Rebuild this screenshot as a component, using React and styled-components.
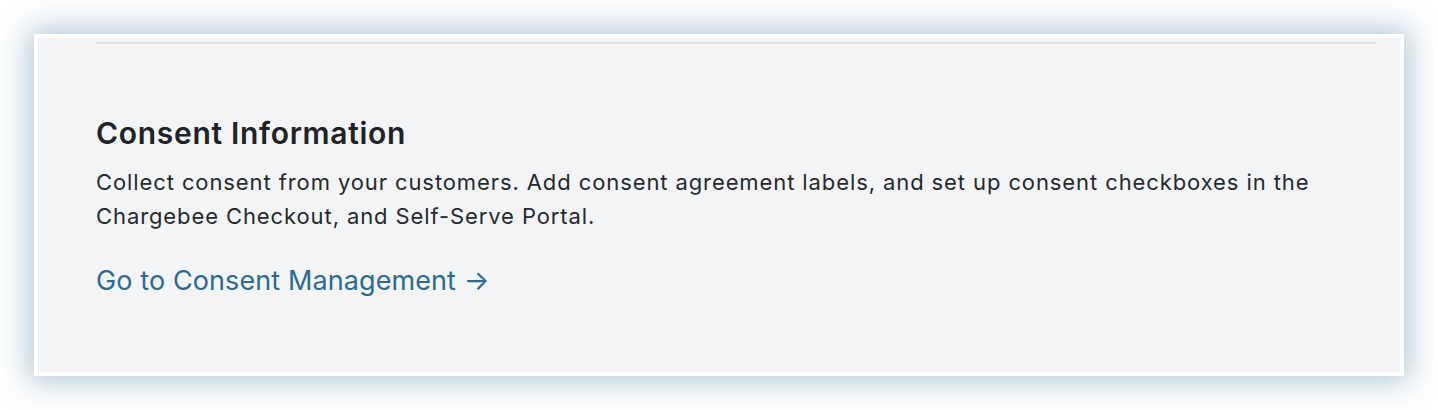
import React from "react";
import styled, { createGlobalStyle } from "styled-components";

const GlobalStyle = createGlobalStyle`
  html, body {
    margin: 0;
    padding: 0;
    background: #ffffff;
  }
  body {
    font-family: Inter, "Noto Sans", "Liberation Sans", sans-serif;
    -webkit-font-smoothing: antialiased;
  }
`;

const Page = styled.div`
  width: 1438px;
  height: 410px;
  padding: 34px 34px 0 34px;
  box-sizing: border-box;
`;

const Frame = styled.section`
  width: 1370px;
  height: 342px;
  box-sizing: border-box;
  border: 4px solid #ffffff;
  background: #f3f4f6;
  box-shadow: 0 0 28px 6px rgba(110, 148, 172, 0.5);
  padding: 4px 24px 0 58px;
`;

const Divider = styled.hr`
  margin: 0;
  border: none;
  height: 2px;
  background: #e1e2e4;
`;

const Body = styled.div`
  display: flex;
  flex-direction: column;
  align-items: flex-start;
  padding-top: 70px;
`;

const Title = styled.h2`
  margin: 0;
  font-size: 30px;
  line-height: 38px;
  font-weight: 600;
  color: #1f2226;
  letter-spacing: 0.7px;
`;

const Text = styled.p`
  margin: 13px 0 0 0;
  font-size: 22px;
  line-height: 34px;
  font-weight: 400;
  color: #26292d;
  letter-spacing: 0.9px;
  max-width: 1260px;
`;

const Link = styled.a`
  margin-top: 31px;
  font-size: 27px;
  line-height: 34px;
  color: #2c6b8f;
  letter-spacing: 0.1px;
  text-decoration: none;
  cursor: pointer;
`;

export default function App() {
  return (
    <>
      <GlobalStyle />
      <Page>
        <Frame>
          <Divider />
          <Body>
            <Title>Consent Information</Title>
            <Text>
              Collect consent from your customers. Add consent agreement labels,
              and set up consent checkboxes in the Chargebee Checkout, and
              Self-Serve Portal.
            </Text>
            <Link>Go to Consent Management →</Link>
          </Body>
        </Frame>
      </Page>
    </>
  );
}
